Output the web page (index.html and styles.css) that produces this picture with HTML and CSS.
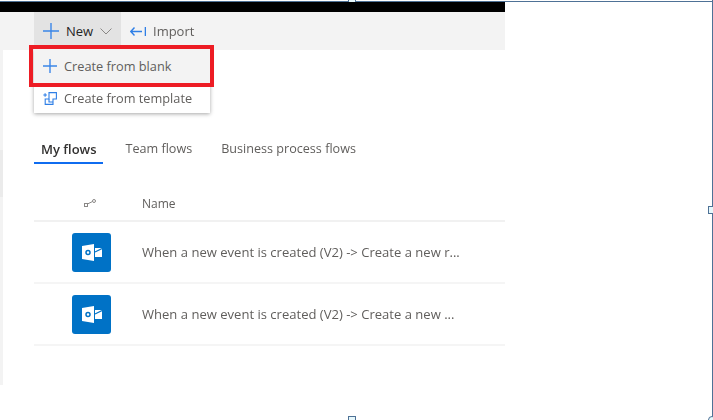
FILE: index.html
```html
<!DOCTYPE html>
<html lang="en">
<head>
<meta charset="utf-8">
<title>Flows</title>
<link rel="stylesheet" href="styles.css">
</head>
<body>
<div class="frame">
  <span class="handle handle-top"></span>
  <span class="handle handle-right"></span>
  <span class="handle handle-bottom"></span>
  <span class="handle handle-corner"></span>
  <div class="app">
    <div class="blackbar"></div>
    <div class="toolbar">
      <div class="tool tool-new">
        <svg class="ic-plus" width="16" height="16" viewBox="0 0 16 16"><path d="M8 0v16M0 8h16"/></svg>
        <span>New</span>
        <svg class="ic-chev" width="12" height="7" viewBox="0 0 12 7"><path d="M.5.5 6 6l5.500-5.500"/></svg>
      </div>
      <div class="tool tool-import">
        <svg class="ic-import" width="16" height="9" viewBox="0 0 16 9"><path d="M4.500 .5.800 4.500l3.700 4M1 4.500h11M15.400 0v9"/></svg>
        <span>Import</span>
      </div>
    </div>
    <div class="main">
      <div class="strip"><div class="strip-dark"></div></div>
      <div class="content">
        <nav class="tabs">
          <a class="tab tab-active">My flows</a>
          <a class="tab">Team flows</a>
          <a class="tab">Business process flows</a>
        </nav>
        <div class="thead">
          <div class="col-icon">
            <svg width="12" height="8" viewBox="0 0 12 8"><rect x=".5" y="4.500" width="3" height="3"/><circle cx="10" cy="2" r="1.500"/><path d="M3.500 5 8.500 2.500"/></svg>
          </div>
          <div class="col-name">Name</div>
        </div>
        <div class="row">
          <div class="col-icon">
            <span class="tile">
              <svg width="20" height="17" viewBox="0 0 20 17"><path class="o-body" d="M0 2 12 0v17L0 15z"/><path class="o-env" d="M13 4h7v9h-7z"/><path class="o-flap" d="M13 8 20 4.500"/><circle class="o-ring" cx="6" cy="8.500" r="2"/></svg>
            </span>
          </div>
          <div class="col-name">When a new event is created (V2) -&gt; Create a new r...</div>
        </div>
        <div class="row">
          <div class="col-icon">
            <span class="tile">
              <svg width="20" height="17" viewBox="0 0 20 17"><path class="o-body" d="M0 2 12 0v17L0 15z"/><path class="o-env" d="M13 4h7v9h-7z"/><path class="o-flap" d="M13 8 20 4.500"/><circle class="o-ring" cx="6" cy="8.500" r="2"/></svg>
            </span>
          </div>
          <div class="col-name">When a new event is created (V2) -&gt; Create a new ...</div>
        </div>
      </div>
    </div>
  </div>
  <div class="menu">
    <div class="menu-item menu-item-hover">
      <svg class="ic-plus" width="14" height="14" viewBox="0 0 14 14"><path d="M7 0v14M0 7h14"/></svg>
      <span>Create from blank</span>
    </div>
    <div class="menu-item">
      <svg class="ic-template" width="14" height="13" viewBox="0 0 14 13"><path d="M.3 3h3.600M2.100 1.200v3.600M6 4.500V.6h7.400V7H10v5.400H2.200V7H6z"/><path d="M6 7v3h4"/></svg>
      <span>Create from template</span>
    </div>
  </div>
  <div class="highlight"></div>
</div>
</body>
</html>
```

FILE: styles.css
```css
* { box-sizing: border-box; }
html, body { margin: 0; padding: 0; background: #fff; }
body { font-family: "Open Sans", "Noto Sans", sans-serif; overflow: hidden; }

.frame {
  position: relative;
  width: 713px;
  height: 420px;
  padding-top: 2px;
  border-right: 1px solid #4e7196;
  box-shadow: inset 0 1px 0 #fff, inset 0 2px 0 #4e7196;
}

.handle {
  position: absolute;
  width: 8px;
  height: 8px;
  background: #e6f7fb;
  border: 1px solid #4e7196;
}
.handle-top { left: 348px; top: -4px; }
.handle-right { left: 708px; top: 206px; }
.handle-bottom { left: 348px; top: 416px; }
.handle-corner { left: 708px; top: 416px; border-radius: 50%; }

.app { width: 505px; filter: blur(.35px); }
.blackbar { height: 10px; background: #000; }

.toolbar {
  height: 38px;
  background: #f3f3f3;
  display: flex;
  padding-left: 34px;
  align-items: stretch;
}
.tool {
  display: flex;
  align-items: center;
  font-size: 13px;
  color: #605e5c;
}
.tool-new {
  width: 87px;
  background: #e3e3e3;
  color: #252423;
  padding-left: 9px;
  gap: 7px;
}
.tool-import { padding-left: 9px; gap: 7px; }

.ic-plus path { stroke: #3b86e8; stroke-width: 1.4; fill: none; }
.ic-chev path { stroke: #8a8886; stroke-width: 1; fill: none; }
.ic-import path { stroke: #2f7fe6; stroke-width: 1.4; fill: none; }

.main { display: flex; height: 335px; }
.strip { width: 3px; background: #f3f3f3; padding-top: 100px; }
.strip-dark { height: 47px; background: #ebebeb; }

.content { flex: 1; padding-left: 31px; padding-top: 83px; }

.tabs { display: flex; gap: 29px; height: 31px; }
.tab {
  font-size: 12.6px;
  line-height: 32px;
  color: #605e5c;
}
.tab:first-child { margin-left: 7px; }
.tab-active {
  color: #323130;
  font-size: 13px;
  font-weight: 600;
  position: relative;
}
.tab-active::after {
  content: "";
  position: absolute;
  left: -7px;
  right: -6px;
  bottom: 0;
  height: 2px;
  background: #0f6cf0;
}

.thead, .row { display: flex; align-items: center; }
.thead {
  height: 58px;
  padding-top: 22px;
  border-bottom: 2px solid #f1f1f1;
  font-size: 12px;
  color: #605e5c;
}
.row {
  height: 62px;
  border-bottom: 2px solid #f5f5f5;
  font-size: 13.05px;
  color: #605e5c;
}
.col-icon { width: 108px; display: flex; justify-content: center; flex: none; }
.thead .col-icon svg { fill: none; stroke: #8a8886; stroke-width: 1; margin-left: 4px; }

.tile {
  width: 39px;
  height: 39px;
  background: #0072c6;
  border-radius: 3px;
  display: flex;
  align-items: center;
  justify-content: center;
  margin-left: 7px;
}
.o-body { fill: #fff; }
.o-env { fill: #fff; }
.o-flap { stroke: #0072c6; stroke-width: 1.2; fill: none; }
.o-ring { fill: none; stroke: #0072c6; stroke-width: 1.5; }

.menu {
  position: absolute;
  left: 34px;
  top: 49px;
  width: 176px;
  height: 64px;
  background: #fff;
  box-shadow: 0 1px 4px rgba(0,0,0,.35);
  filter: blur(.35px);
}
.menu-item {
  height: 30px;
  display: flex;
  align-items: center;
  gap: 7px;
  padding-left: 9px;
  font-size: 12.75px;
  color: #605e5c;
}
.menu-item-hover { height: 34px; background: #f3f3f3; }
.ic-template path { stroke: #2f7fe6; stroke-width: 1.1; fill: none; }

.highlight {
  position: absolute;
  left: 29px;
  top: 45px;
  width: 185px;
  height: 42px;
  border: 4px solid #ed1c24;
}
```
